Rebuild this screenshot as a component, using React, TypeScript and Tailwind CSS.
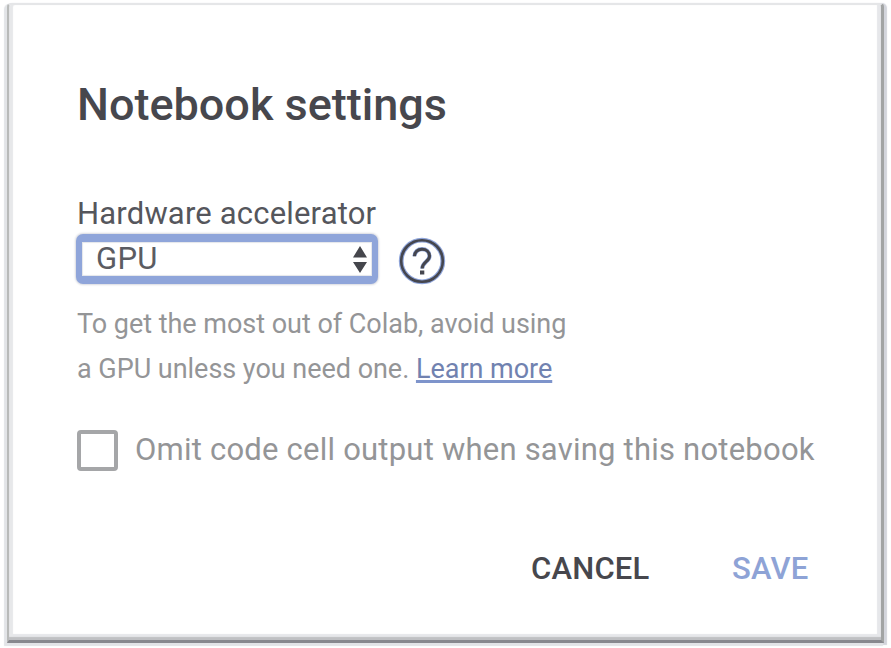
import { useState } from "react";

function HelpIcon() {
  return (
    <svg width="48" height="48" viewBox="0 0 48 48" fill="none" aria-label="Help">
      <circle cx="24" cy="24" r="20.8" stroke="#8fa5da" strokeWidth="4.8" />
      <circle cx="24" cy="24" r="20.8" stroke="#45464e" strokeWidth="2.6" />
      <path d="M16.5 19.2c0-4.2 3.3-7 7.500-7s7.500 2.800 7.500 7c0 5.200-7.300 6-7.300 12.200" stroke="#8fa5da" strokeWidth="4.2" />
      <path d="M16.5 19.2c0-4.2 3.3-7 7.500-7s7.500 2.800 7.500 7c0 5.200-7.300 6-7.300 12.200" stroke="#45464e" strokeWidth="3" />
      <rect x="22" y="33.5" width="4.3" height="4" fill="#45464e" />
    </svg>
  );
}

function AcceleratorSelect() {
  return (
    <button
      type="button"
      className="flex h-[50px] w-[302px] items-center justify-between rounded-[7px] border-x-[6px] border-y-[8px] border-[#8fa5da] bg-white pl-[14px] pr-[5px] shadow-[0_0_2px_1px_#d8dae0,inset_0_0_1px_1px_#e4e6ea]"
    >
      <span className="text-[31px] leading-[30px] tracking-[0.3px] text-[#5b5c62]">GPU</span>
      <svg width="14" height="27" viewBox="0 0 14 27" fill="#45464c">
        <path d="M7 0L14 11.5H0zM0 16H14L7 27z" />
      </svg>
    </button>
  );
}

export default function App() {
  const [omit, setOmit] = useState(false);
  return (
    <div className="h-[648px] w-[891px] overflow-hidden bg-white pl-[7px] pt-[3px] font-['Roboto','Liberation_Sans',sans-serif]">
      <main className="flex h-[640px] w-[877px] flex-col rounded-t-[4px] border-b-[3px] border-l-2 border-r-[3px] border-t-2 border-b-[#87888e] border-l-[#b8bab9] border-r-[#a2a4a4] border-t-[#e5e6e8] bg-white pl-[68px] pt-[72px] shadow-[-2px_2px_1px_1px_#e2e4e7,2px_1px_1px_1px_#d3d5dc,inset_0_-3px_1px_#bfc0c3,inset_4px_0_1px_#e7e8ea,inset_-4px_-6px_1px_#e6e7ea]">
        <h1 className="h-[56px] whitespace-nowrap text-[45px] font-medium leading-[56px] text-[#47474d]">
          Notebook settings
        </h1>
        <label className="mt-[66px] h-[30px] whitespace-nowrap text-[31px] leading-[30px] tracking-[0.18px] text-[#55565c]">
          Hardware accelerator
        </label>
        <div className="-ml-px mt-[5px] flex h-[50px] items-center gap-5">
          <AcceleratorSelect />
          <span className="mt-[4px]">
            <HelpIcon />
          </span>
        </div>
        <p className="mt-[18px] whitespace-nowrap text-[27px] leading-[45px] tracking-[-0.03px] text-[#949597]">
          To get the most out of Colab, avoid using
          <br />
          a GPU unless you need one.{" "}
          <a className="text-[#7182b0] underline decoration-[#7e94cb] decoration-[3px] underline-offset-[2px] [text-decoration-skip-ink:none]">
            Learn more
          </a>
        </p>
        <div className="mt-[38px] flex h-[41px] items-center gap-[17px]">
          <button
            type="button"
            role="checkbox"
            aria-checked={omit}
            onClick={() => setOmit(!omit)}
            className="h-[41px] w-[41px] rounded-[4px] border-4 border-[#a5a6a8]"
          />
          <span className="-mt-[2px] whitespace-nowrap text-[31px] leading-[40px] tracking-[0.22px] text-[#949597]">
            Omit code cell output when saving this notebook
          </span>
        </div>
        <div className="mt-[78px] flex h-[40px] items-center pl-[454px] text-[31px] font-medium leading-[40px] tracking-[0.2px]">
          <button type="button" className="w-[201px] text-left text-[#47474d]">
            CANCEL
          </button>
          <button type="button" className="text-[#8ea3d6]">
            SAVE
          </button>
        </div>
      </main>
    </div>
  );
}
